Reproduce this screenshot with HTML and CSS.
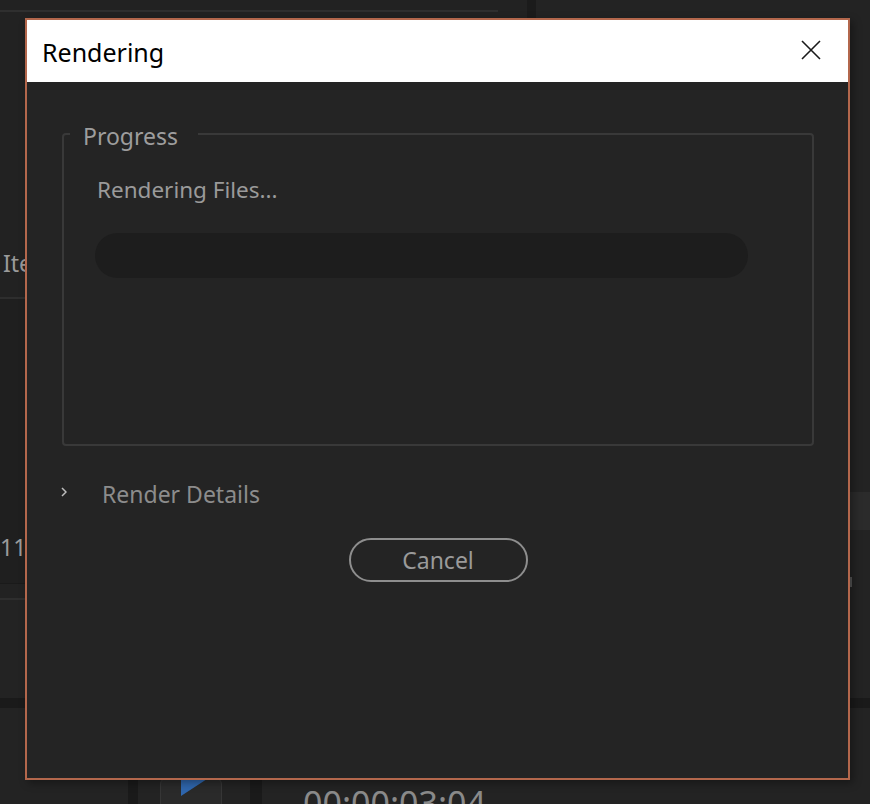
FILE: index.html
```html
<!DOCTYPE html>
<html lang="en">
  <head>
    <meta charset="UTF-8" />
    <meta name="viewport" content="width=device-width, initial-scale=1.0" />
    <title>Rendering</title>
    <link rel="stylesheet" href="styles.css">
  </head>
  <body>
    <div class="app">
      <div class="upper">
        <section class="project-panel">
          <div class="panel-tabs"><div class="tab-line"></div></div>
          <div class="panel-toolbar"></div>
          <div class="list-head">Items</div>
          <div class="list-body"><span class="item-count">11 Items</span></div>
          <div class="list-foot"></div>
          <div class="panel-rest"></div>
        </section>
        <div class="v-split"></div>
        <section class="monitor-panel">
          <div class="side-button">E</div>
          <div class="side-mark"></div>
        </section>
      </div>
      <div class="h-split"></div>
      <div class="lower">
        <div class="tools-gap"></div>
        <div class="strip"></div>
        <div class="tool-slot">
          <div class="tool-btn">
            <svg width="30" height="20" viewBox="0 0 30 20">
              <polygon points="2,0 28,0 2,17" fill="#2f66ad" />
            </svg>
          </div>
        </div>
        <div class="strip wide"></div>
        <div class="timecode">00:00:03:04</div>
      </div>
    </div>

    <div class="dialog">
      <div class="dialog_title">
        <span>Rendering</span>
        <button class="dialog_close" aria-label="Close">
          <svg width="20" height="20" viewBox="0 0 20 20">
            <path d="M1 1 L19 19 M19 1 L1 19" stroke="#1a1a1a" stroke-width="1.6" fill="none" />
          </svg>
        </button>
      </div>
      <div class="dialog_body">
        <fieldset class="progress-group">
          <legend>Progress</legend>
          <div class="progress-inner">
            <div class="status">Rendering Files...</div>
            <div class="progress-track"></div>
          </div>
        </fieldset>

        <div class="details-row">
          <svg class="chevron" width="6" height="10" viewBox="0 0 6 10">
            <polyline points="1,1 5,5 1,9" stroke="#bdbdbd" stroke-width="1.5" fill="none" />
          </svg>
          <span>Render Details</span>
        </div>

        <div class="actions">
          <button class="cancel-btn">Cancel</button>
        </div>
      </div>
    </div>
  </body>
</html>
```

FILE: styles.css
```css
* {
  box-sizing: border-box;
}

body {
  margin: 0;
  font-family: "Noto Sans", "Open Sans", sans-serif;
  background: #232323;
  color: #9a9a9a;
  overflow: hidden;
}

.app {
  width: 870px;
  height: 804px;
  display: flex;
  flex-direction: column;
  overflow: hidden;
}

/* background workspace */
.upper {
  height: 698px;
  flex-shrink: 0;
  display: flex;
}

.project-panel {
  width: 527px;
  display: flex;
  flex-direction: column;
  background: #222;
}

.panel-tabs {
  height: 12px;
  padding-top: 10px;
}

.tab-line {
  width: 498px;
  height: 2px;
  background: #2f2f2f;
}

.panel-toolbar {
  height: 228px;
}

.list-head {
  height: 59px;
  padding: 8px 0 0 3px;
  font-size: 23px;
  line-height: 30px;
  border-bottom: 2px solid #2e2e2e;
  white-space: nowrap;
}

.list-body {
  height: 285px;
  padding: 233px 0 0 0;
  background: #1f1f1f;
  border-bottom: 1px solid #1a1a1a;
  font-size: 23px;
  line-height: 30px;
  white-space: nowrap;
}

.list-foot {
  height: 16px;
  border-bottom: 2px solid #2e2e2e;
}

.panel-rest {
  flex: 1;
  background: #232323;
}

.v-split {
  width: 9px;
  background: #1b1b1b;
}

.monitor-panel {
  flex: 1;
  display: flex;
  flex-direction: column;
  align-items: flex-end;
  background: #232323;
}

.side-button {
  margin-top: 492px;
  width: 100px;
  height: 38px;
  background: #2b2b2b;
  color: #6f6f6f;
  font-size: 20px;
  line-height: 38px;
  padding-left: 68px;
}

.side-mark {
  margin-top: 47px;
  width: 20px;
  height: 10px;
  border-left: 2px solid #555;
}

.h-split {
  height: 10px;
  flex-shrink: 0;
  background: #1a1a1a;
}

.lower {
  flex: 1;
  display: flex;
  overflow: hidden;
}

.tools-gap {
  width: 128px;
}

.strip {
  width: 10px;
  background: #1a1a1a;
}

.strip.wide {
  width: 12px;
}

.tool-slot {
  width: 112px;
  padding: 70px 0 0 22px;
}

.tool-btn {
  width: 62px;
  height: 60px;
  background: #2a2a2a;
  border: 1px solid #363636;
  border-radius: 6px;
  padding-left: 18px;
}

.tool-btn svg {
  display: block;
}

.timecode {
  padding: 75px 0 0 41px;
  font-size: 34px;
  line-height: 40px;
  color: #8a8a8a;
  white-space: nowrap;
}

/* dialog */
.dialog {
  position: absolute;
  left: 25px;
  top: 18px;
  width: 825px;
  height: 762px;
  border: 2px solid #b3674c;
  background: #242424;
  box-shadow: 3px 3px 8px rgba(0, 0, 0, 0.35);
  display: flex;
  flex-direction: column;
}

.dialog_title {
  height: 62px;
  background: #fff;
  display: flex;
  align-items: center;
  justify-content: space-between;
  padding: 2px 27px 0 15px;
  font-size: 25px;
  color: #000;
}

.dialog_close {
  border: none;
  background: none;
  padding: 0;
  display: flex;
  margin-top: -4px;
}

.dialog_body {
  flex: 1;
  padding: 38px 34px 0 35px;
}

.progress-group {
  margin: 0;
  padding: 0 0 166px 0;
  border: 2px solid #393939;
  border-radius: 4px;
}

.progress-group legend {
  margin-left: 6px;
  padding: 4px 20px 0 13px;
  font-size: 23px;
  line-height: 24px;
  color: #9d9d9d;
}

.progress-inner {
  padding: 28px 0 0 31px;
}

.status {
  padding-left: 2px;
  font-size: 22.5px;
  line-height: 28px;
  color: #9a9a9a;
}

.progress-track {
  margin-top: 29px;
  width: 653px;
  height: 45px;
  border-radius: 23px;
  background: #1d1d1d;
}

.details-row {
  margin-top: 34px;
  display: flex;
  align-items: center;
  gap: 35px;
  font-size: 23px;
  line-height: 28px;
  color: #8c8c8c;
}

.chevron {
  display: block;
  margin-top: -4px;
  margin-left: -1px;
}

.actions {
  margin-top: 30px;
  display: flex;
  justify-content: center;
}

.cancel-btn {
  width: 179px;
  height: 44px;
  border: 2.5px solid #8e8e8e;
  border-radius: 22px;
  background: transparent;
  font-family: inherit;
  font-size: 23px;
  color: #9a9a9a;
  padding: 0;
}
```
